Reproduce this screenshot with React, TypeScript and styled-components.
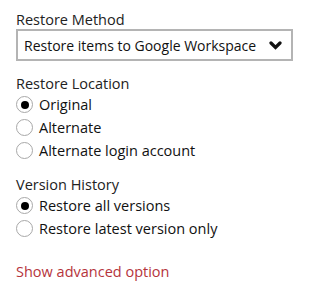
import styled, { createGlobalStyle } from 'styled-components';

const GlobalStyle = createGlobalStyle`
    body {
        margin: 0;
        background: #ffffff;
        font-family: "Open Sans", "Liberation Sans", sans-serif;
        color: #222222;
    }
`;

const locations = ['Original', 'Alternate', 'Alternate login account'];
const versions = ['Restore all versions', 'Restore latest version only'];

function Radio({ label, checked }) {
    return (
        <RadioRow>
            <RadioCircle checked={checked} />
            <RadioLabel>{label}</RadioLabel>
        </RadioRow>
    );
}

export default function App() {
    return (
        <>
            <GlobalStyle />
            <Panel>
                <Section>
                    <Label>Restore Method</Label>
                    <Select>
                        <SelectText>Restore items to Google Workspace</SelectText>
                        <svg width="13" height="9" viewBox="0 0 13 9">
                            <path d="M2 2 L6.5 6.5 L11 2" fill="none" stroke="#111" strokeWidth="3.2" strokeLinecap="round" strokeLinejoin="miter" />
                        </svg>
                    </Select>
                </Section>
                <Section>
                    <Label>Restore Location</Label>
                    {locations.map((l, i) => <Radio key={l} label={l} checked={i === 0} />)}
                </Section>
                <Section>
                    <Label>Version History</Label>
                    {versions.map((v, i) => <Radio key={v} label={v} checked={i === 0} />)}
                </Section>
                <AdvancedLink>Show advanced option</AdvancedLink>
            </Panel>
        </>
    );
}

const Panel = styled.div`
    width: 310px;
    height: 290px;
    box-sizing: border-box;
    padding: 10px 17px 0 16px;
    display: flex;
    flex-direction: column;
    gap: 13px;
`;

const Section = styled.div`
    display: flex;
    flex-direction: column;
`;

const Label = styled.div`
    font-size: 14.5px;
    line-height: 19px;
    color: #222;
`;

const Select = styled.div`
    height: 32px;
    box-sizing: border-box;
    border: 2px solid #b4b4b4;
    display: flex;
    align-items: center;
    justify-content: space-between;
    padding: 0 9px 0 6px;
`;

const SelectText = styled.span`
    font-size: 14px;
    color: #111;
`;

const RadioRow = styled.div`
    height: 23px;
    display: flex;
    align-items: center;
    gap: 6px;
`;

const RadioCircle = styled.span<{ checked?: boolean }>`
    width: 17px;
    height: 17px;
    box-sizing: border-box;
    border-radius: 50%;
    border: 1.6px solid #a8a8a8;
    display: flex;
    align-items: center;
    justify-content: center;
    &::after {
        content: '';
        width: 8px;
        height: 8px;
        border-radius: 50%;
        background: #000;
        display: ${p => (p.checked ? 'block' : 'none')};
    }
`;

const RadioLabel = styled.span`
    font-size: 14.5px;
    color: #111;
`;

const AdvancedLink = styled.div`
    margin-top: 9px;
    font-size: 14.5px;
    color: #b5343c;
    cursor: pointer;
`;
